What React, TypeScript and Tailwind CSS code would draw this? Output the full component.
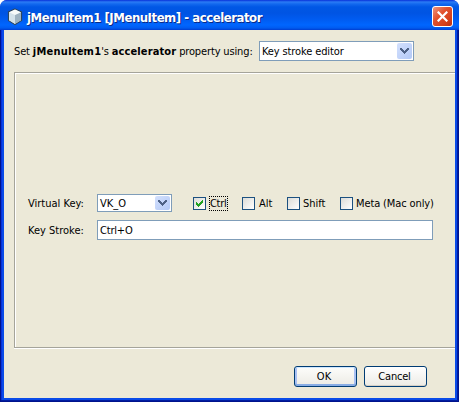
import type { ReactNode } from 'react';

function Arrow() {
  return (
    <span className="flex h-full w-[15px] shrink-0 items-center justify-center rounded-[2px] bg-gradient-to-br from-[#d3e0fd] to-[#b3c9f6]">
      <svg width="9" height="6" viewBox="0 0 9 6" shapeRendering="crispEdges" fill="#4d6185">
        <path d="M0 0h2v1h1v1h1v1h1v-1h1v-1h1v-1h2v2h-1v1h-1v1h-1v1h-1v1h-1v-1h-1v-1h-1v-1h-1v-1h-1z" />
      </svg>
    </span>
  );
}

function Check({ label, checked = false, className = '' }: { label: ReactNode; checked?: boolean; className?: string }) {
  return (
    <div className={`flex h-[18px] shrink-0 items-center ${className}`}>
      <span className="flex size-[13px] shrink-0 items-center justify-center border border-[#1c5180] bg-gradient-to-br from-[#dcdcd7] to-white">
        {checked && (
          <svg width="7" height="7" viewBox="0 0 7 7" shapeRendering="crispEdges" fill="#21a121">
            <path d="M6 0h1v3h-1v1h-1v1h-1v1h-1v1h-1v-1h-1v-1h-1v-3h1v1h1v1h1v-1h1v-1h1v-1h1z" />
          </svg>
        )}
      </span>
      {label}
    </div>
  );
}

export default function App() {
  return (
    <div className="flex h-[402px] w-[459px] flex-col overflow-hidden rounded-t-[7px] bg-[#0831d9] font-['DejaVu_Sans_Condensed','DejaVu_Sans',sans-serif] text-[11px] leading-[14px] whitespace-nowrap text-black [font-stretch:condensed]">
      <header className="flex h-[30px] shrink-0 items-center bg-[linear-gradient(to_bottom,#0831d9_0px,#2a7bf5_2px,#1268ee_4px,#0057e5_7px,#0054e3_13px,#005bf0_19px,#0066ff_25px,#005bf0_28px,#003dd0_30px)] pt-[3px] pr-[6px] pl-[7px]">
        <svg width="16" height="18" viewBox="0 0 16 18" className="shrink-0">
          <path d="M8 1L14.5 4v8.5L8 16.5 1.5 12.5V4z" fill="#e5eef3" stroke="#2d465f" strokeWidth="1.2" />
          <path d="M2 4.3L8 7v9L2 12.2z" fill="#d3e2ea" />
          <path d="M8 7l6-2.7v8L8 16z" fill="#9db2c0" />
          <path d="M2.2 4.2L8 1.5l5.8 2.7L8 6.8z" fill="#f6faf9" />
        </svg>
        <h1 className="ml-[4px] w-[236px] pt-[2px] text-[13px] leading-[18px] font-bold tracking-[-0.46px] text-white [text-shadow:1px_1px_0_#0b2a86]">
          jMenuItem1 [JMenuItem] - accelerator
        </h1>
        <button className="ml-auto flex size-[21px] items-center justify-center rounded-[3px] border border-white bg-[linear-gradient(135deg,#ec9580_0%,#e1512d_40%,#d6401b_75%,#b83012_100%)]">
          <svg width="11" height="11" viewBox="0 0 11 11" stroke="white" strokeWidth="2.2">
            <path d="M.7.7l9.6 9.6M10.3.7L.7 10.3" />
          </svg>
        </button>
      </header>
      <div className="flex grow border-x border-b border-[#00138c] bg-[#0a4be8] px-[3px] pb-[3px] shadow-[inset_-1px_-1px_0_#001da0,inset_1px_0_0_#0831d9]">
        <main className="flex grow flex-col bg-[#ece9d8]">
          <div className="mt-[11px] ml-[10px] flex h-[20px] items-center">
            <p className="w-[245px] shrink-0 pt-[2px] tracking-[-0.14px]">
              Set <b className="tracking-[0.2px]">jMenuItem1</b>'s <b className="tracking-[0.1px]">accelerator</b> property using:
            </p>
            <div className="flex h-[20px] w-[155px] items-center justify-between border border-[#7f9db9] bg-white p-px pl-[2px]">
              <span className="pt-px tracking-[-0.12px]">Key stroke editor</span>
              <Arrow />
            </div>
          </div>
          <section className="mt-[11px] ml-[10px] h-[276px] border-y border-l border-[#a5a49a] pt-[121px] pl-[13px] shadow-[inset_1px_1px_0_white,0_1px_0_white]">
            <div className="flex h-[18px] items-center">
              <span className="w-[69px] shrink-0 pt-px">Virtual Key:</span>
              <div className="flex h-[18px] w-[75px] items-center justify-between border border-[#7f9db9] bg-white p-px pl-[2px]">
                <span className="pt-px">VK_O</span>
                <Arrow />
              </div>
              <Check
                checked
                className="ml-[21px] w-[49px]"
                label={<span className="ml-[3px] h-[15px] w-[19px] border border-dotted border-black text-[11px] leading-[13px] tracking-[-0.3px]">Ctrl</span>}
              />
              <Check className="w-[45px]" label={<span className="ml-[4px] pt-px">Alt</span>} />
              <Check className="w-[53px]" label={<span className="ml-[3px] pt-px">Shift</span>} />
              <Check label={<span className="ml-[3px] pt-px tracking-[-0.12px]">Meta (Mac only)</span>} />
            </div>
            <div className="mt-[8px] flex h-[20px] items-center">
              <span className="w-[69px] shrink-0 pt-[2px]">Key Stroke:</span>
              <div className="flex h-[20px] w-[336px] items-center border border-[#7f9db9] bg-white pt-px pl-[2px] tracking-[-0.2px]">Ctrl+O</div>
            </div>
          </section>
          <footer className="mt-[18px] mr-[28px] flex justify-end gap-[7px]">
            <button className="h-[21px] w-[63px] rounded-[3px] border border-[#003c74] bg-gradient-to-b from-[#fdfdfb] to-[#ecebe4] pr-[3px] leading-[17px] shadow-[inset_0_1px_0_#cee7ff,inset_0_-2px_0_#89ade4,inset_2px_0_0_#a9c1f3,inset_-2px_0_0_#a9c1f3]">
              OK
            </button>
            <button className="h-[21px] w-[63px] rounded-[3px] border border-[#003c74] bg-gradient-to-b from-white to-[#ecebe5] pr-[2px] leading-[17px] tracking-[-0.2px] shadow-[inset_0_-1px_0_#d6d0c5]">
              Cancel
            </button>
          </footer>
        </main>
      </div>
    </div>
  );
}
